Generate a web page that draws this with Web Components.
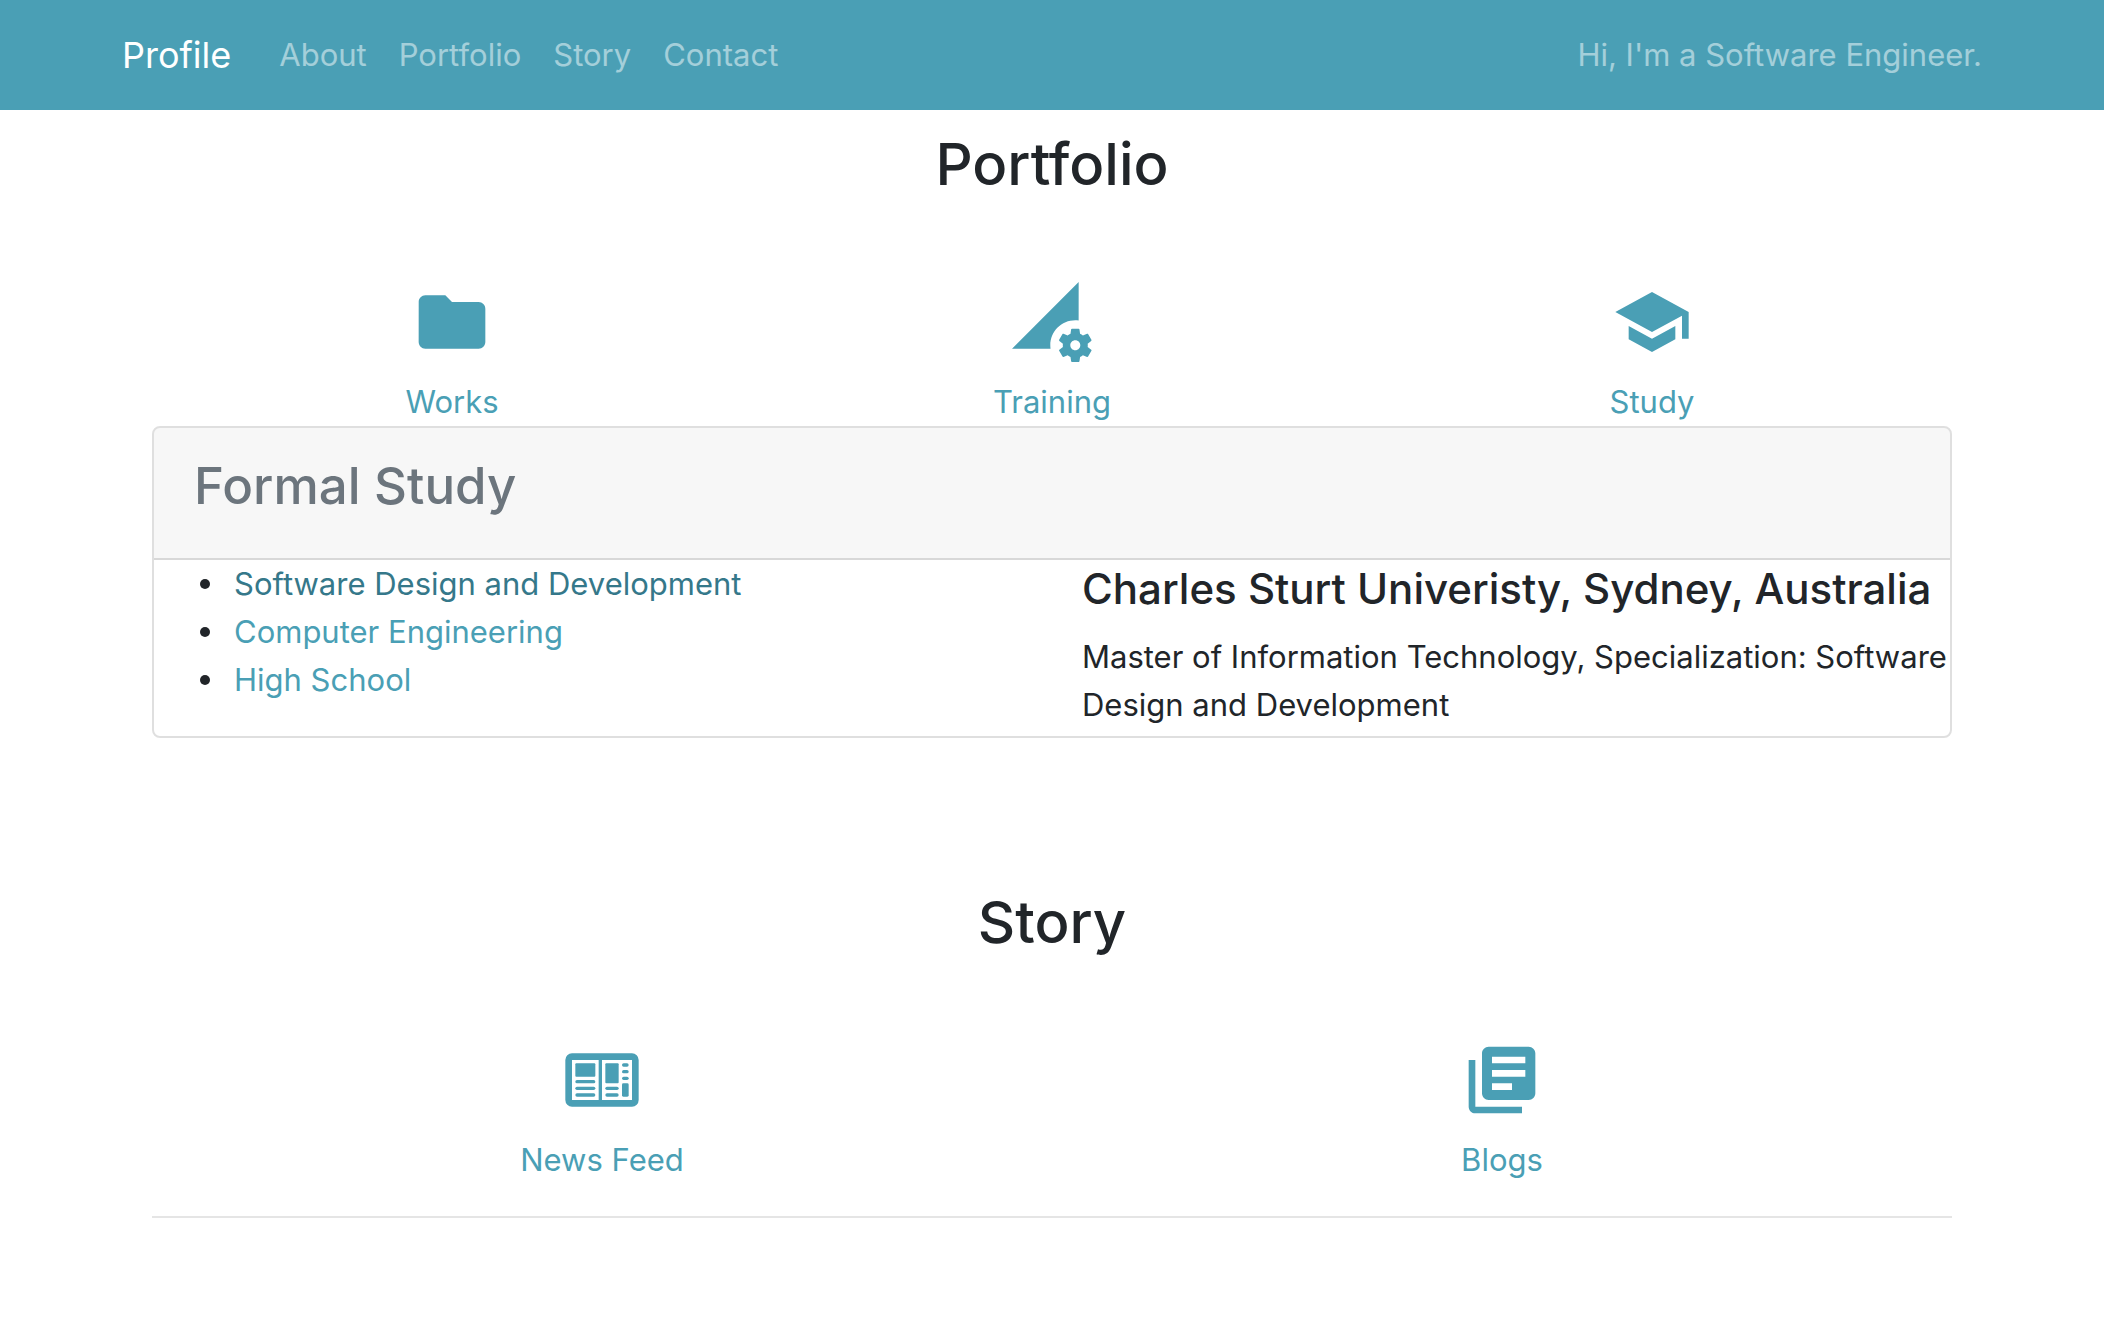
<!DOCTYPE html>
<html lang="en">
<head>
<meta charset="utf-8">
<meta name="viewport" content="width=device-width, initial-scale=1">
<title>Profile</title>
<style>
  :root { --accent: #4a9fb5; --accent-dark: #35788a; --ink: #212529; --muted: #6c757d; }
  body { margin: 0; background: #fff; color: var(--ink); font: 400 31px/48px Inter, "Liberation Sans", sans-serif; }
  main { box-sizing: border-box; max-width: 1920px; margin: 0 auto; padding: 16px 60px; }
</style>
</head>
<body>
<site-nav>
  <nav-link href="#about">About</nav-link>
  <nav-link href="#portfolio">Portfolio</nav-link>
  <nav-link href="#story">Story</nav-link>
  <nav-link href="#contact">Contact</nav-link>
  <span slot="tagline">Hi, I'm a Software Engineer.</span>
</site-nav>
<main>
  <page-section id="portfolio" heading="Portfolio">
    <icon-link icon="folder" href="#works">Works</icon-link>
    <icon-link icon="training" href="#training">Training</icon-link>
    <icon-link icon="school" href="#study">Study</icon-link>
    <study-card slot="detail" heading="Formal Study"></study-card>
  </page-section>
  <page-section id="story" heading="Story">
    <icon-link icon="news" href="#news">News Feed</icon-link>
    <icon-link icon="library" href="#blogs">Blogs</icon-link>
    <section-rule slot="detail"></section-rule>
  </page-section>
</main>
<script>
const define = (name, render) => customElements.define(name, class extends HTMLElement {
  connectedCallback() {
    if (!this.shadowRoot) this.attachShadow({ mode: 'open' }).innerHTML = render(this);
  }
});

define('nav-link', el => `
  <style>
    :host { display: block; }
    a { display: block; padding: 16px; color: rgba(255,255,255,.5); text-decoration: none; }
    a:hover { color: rgba(255,255,255,.75); }
  </style>
  <a href="${el.getAttribute('href')}"><slot></slot></a>`);

define('site-nav', () => `
  <style>
    :host { display: block; background: var(--accent); }
    nav { box-sizing: border-box; display: flex; align-items: center; max-width: 1920px; margin: 0 auto; padding: 15px 30px; }
    .brand { margin-right: 32px; color: #fff; font-size: 36px; line-height: 60px; text-decoration: none; }
    .links { display: flex; flex: 1; }
    ::slotted([slot=tagline]) { color: rgba(255,255,255,.5); }
  </style>
  <nav>
    <a class="brand" href="#">Profile</a>
    <div class="links"><slot></slot></div>
    <slot name="tagline"></slot>
  </nav>`);

define('page-section', el => `
  <style>
    :host { display: block; }
    :host(:not(:first-child)) { margin-top: 146px; }
    h2 { margin: 0 0 79px; font-size: 58px; font-weight: 500; line-height: 77px; text-align: center; }
    .row { display: flex; }
    ::slotted(icon-link) { flex: 1; }
  </style>
  <h2>${el.getAttribute('heading')}</h2>
  <div class="row"><slot></slot></div>
  <slot name="detail"></slot>`);

const icons = {
  folder: '<path d="M10 4H4c-1.1 0-1.99.9-1.99 2L2 18c0 1.1.9 2 2 2h16c1.1 0 2-.9 2-2V8c0-1.1-.9-2-2-2h-8l-2-2z"/>',
  training: '<path d="M18.99 11.5c.34 0 .67.03 1 .07L20 0 0 20h11.56c-.04-.33-.07-.66-.07-1 0-4.14 3.36-7.5 7.5-7.5zm3.71 7.99c.02-.16.04-.32.04-.49 0-.17-.01-.33-.04-.49l1.06-.83c.09-.08.12-.21.06-.32l-1-1.73c-.06-.11-.19-.15-.31-.11l-1.24.5c-.26-.2-.54-.37-.85-.49l-.19-1.32c-.01-.12-.12-.21-.24-.21h-2c-.12 0-.23.09-.25.21l-.19 1.32c-.3.13-.59.29-.85.49l-1.24-.5c-.11-.04-.24 0-.31.11l-1 1.73c-.06.11-.04.24.06.32l1.06.83c-.02.16-.03.32-.03.49 0 .17.01.33.03.49l-1.06.83c-.09.08-.12.21-.06.32l1 1.73c.06.11.19.15.31.11l1.24-.5c.26.2.54.37.85.49l.19 1.32c.02.12.12.21.25.21h2c.12 0 .23-.09.25-.21l.19-1.32c.3-.13.59-.29.84-.49l1.25.5c.11.04.24 0 .31-.11l1-1.73c.06-.11.03-.24-.06-.32l-1.07-.83zm-3.71 1.01c-.83 0-1.5-.67-1.5-1.5s.67-1.5 1.5-1.5 1.5.67 1.5 1.5-.67 1.5-1.5 1.5z"/>',
  school: '<path d="M5 13.18v4L12 21l7-3.82v-4L12 17l-7-3.82zM12 3L1 9l11 6 9-4.91V17h2V9L12 3z"/>',
  library: '<path d="M4 6H2v14c0 1.1.9 2 2 2h14v-2H4V6zm16-4H8c-1.1 0-2 .9-2 2v12c0 1.1.9 2 2 2h12c1.1 0 2-.9 2-2V4c0-1.1-.9-2-2-2zm-1 9H9V9h10v2zm-4 4H9v-2h6v2zm4-8H9V5h10v2z"/>',
  news: '<path fill-rule="evenodd" d="M3 4h18a2 2 0 0 1 2 2v12a2 2 0 0 1-2 2H3a2 2 0 0 1-2-2V6a2 2 0 0 1 2-2zM3 6v12h8V6zM12 6v12h9V6z"/>'
    + '<rect x="4" y="7" width="6" height="4" rx=".3"/><rect x="4" y="12" width="6" height="1" rx=".5"/><rect x="4" y="14" width="6" height="1" rx=".5"/><rect x="4" y="16" width="6" height="1" rx=".5"/>'
    + '<rect x="13" y="7" width="4" height="6" rx=".3"/><rect x="13" y="14" width="4" height="1" rx=".5"/><rect x="13" y="16" width="4" height="1" rx=".5"/>'
    + '<rect x="18" y="7" width="2" height="1" rx=".5"/><rect x="18" y="9" width="2" height="1" rx=".5"/><rect x="18" y="11" width="2" height="1" rx=".5"/><rect x="18" y="13" width="2" height="4" rx=".4"/>'
};

define('icon-link', el => `
  <style>
    :host { display: flex; justify-content: center; }
    a { display: flex; flex-direction: column; align-items: center; gap: 16px; color: var(--accent); text-decoration: none; }
    a:hover { color: var(--accent-dark); }
    svg { display: block; width: 80px; height: 80px; fill: var(--accent); }
  </style>
  <a href="${el.getAttribute('href')}"><svg viewBox="0 0 24 24" aria-hidden="true">${icons[el.getAttribute('icon')]}</svg><span><slot></slot></span></a>`);

define('study-card', el => `
  <style>
    :host { display: block; border: 2px solid rgba(0,0,0,.125); border-radius: 8px; overflow: hidden; }
    header { padding: 24px 40px; background: rgba(0,0,0,.03); border-bottom: 2px solid rgba(0,0,0,.125); }
    h3 { margin: 0 0 15px; color: var(--muted); font-size: 51px; font-weight: 500; line-height: 67px; }
    .cols { display: grid; grid-template-columns: 1fr 1fr; }
    .cols > * { min-width: 0; }
    ul { margin: 0 0 32px; padding: 0 0 0 46px; list-style: none; }
    li { display: flex; align-items: center; gap: 24px; }
    li::before { content: ""; width: 10px; height: 10px; border-radius: 50%; background: var(--ink); }
    .entry { padding-left: 30px; }
    h4 { margin: 0 0 15px; font-size: 42px; font-weight: 500; line-height: 58px; white-space: nowrap; }
    p { margin: 0; }
    a { color: var(--accent); text-decoration: none; }
    a.current, a:hover { color: var(--accent-dark); }
  </style>
  <header><h3>${el.getAttribute('heading')}</h3></header>
  <div class="cols">
    <ul>
      <li><a class="current" href="#software">Software Design and Development</a></li>
      <li><a href="#computer">Computer Engineering</a></li>
      <li><a href="#school">High School</a></li>
    </ul>
    <div class="entry">
      <h4>Charles Sturt Univeristy, Sydney, Australia</h4>
      <p>Master of Information Technology, Specialization: Software Design and Development</p>
    </div>
  </div>`);

define('section-rule', () => `
  <style>
    :host { display: block; }
    hr { margin: 32px 0; border: 0; border-top: 2px solid rgba(0,0,0,.1); }
  </style>
  <hr>`);
</script>
</body>
</html>
